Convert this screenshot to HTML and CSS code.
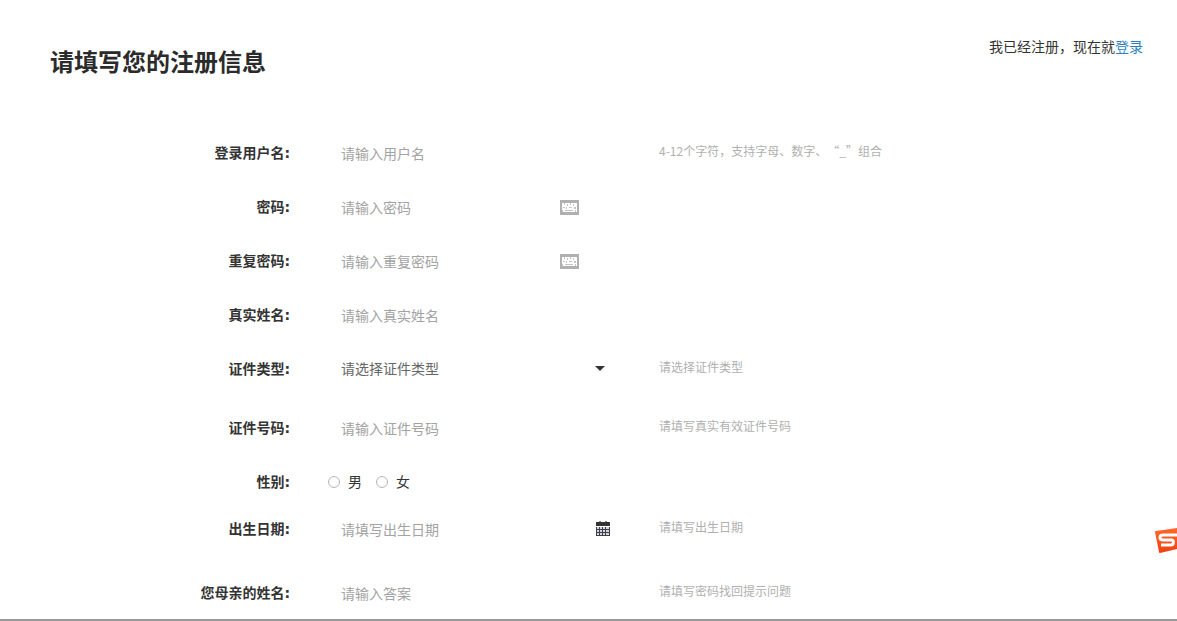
FILE: index.html
```html
<!DOCTYPE html>
<html lang="zh">
<head>
<meta charset="utf-8">
<title>注册</title>
<link rel="stylesheet" href="styles.css">
</head>
<body>
<div class="page">
  <header class="top">
    <h1 class="title">请填写您的注册信息</h1>
    <p class="login">我已经注册，现在就<a href="#" class="login-link">登录</a></p>
  </header>
  <form class="form">
    <div class="row r54">
      <label class="label">登录用户名:</label>
      <div class="field"><input class="input" placeholder="请输入用户名"></div>
      <div class="hint">4-12个字符，支持字母、数字、<span class="quote">“_”</span>组合</div>
    </div>
    <div class="row r54">
      <label class="label">密码:</label>
      <div class="field"><input class="input" placeholder="请输入密码">
        <svg class="kbd" viewBox="0 0 19 15" width="19" height="15"><rect width="19" height="15" fill="#b0b0b0"/><rect x="2" y="3" width="15" height="9" fill="#fff"/><path d="M4 3h1v2H4zM7 4h1v2H7zM10 3h1v2h-1zM13 4h1v2h-1zM3 7h2v1H3zM6 7h1v2H6zM9 7h3v1H9zM14 7h2v2h-2zM2 10h1v2H2zM5 10h8v1H5zM15 10h1v2h-1z" fill="#c4c4c4"/></svg>
      </div>
      <div class="hint"></div>
    </div>
    <div class="row r54">
      <label class="label">重复密码:</label>
      <div class="field"><input class="input" placeholder="请输入重复密码">
        <svg class="kbd" viewBox="0 0 19 15" width="19" height="15"><rect width="19" height="15" fill="#b0b0b0"/><rect x="2" y="3" width="15" height="9" fill="#fff"/><path d="M4 3h1v2H4zM7 4h1v2H7zM10 3h1v2h-1zM13 4h1v2h-1zM3 7h2v1H3zM6 7h1v2H6zM9 7h3v1H9zM14 7h2v2h-2zM2 10h1v2H2zM5 10h8v1H5zM15 10h1v2h-1z" fill="#c4c4c4"/></svg>
      </div>
      <div class="hint"></div>
    </div>
    <div class="row r54">
      <label class="label">真实姓名:</label>
      <div class="field"><input class="input" placeholder="请输入真实姓名"></div>
      <div class="hint"></div>
    </div>
    <div class="row r59">
      <label class="label">证件类型:</label>
      <div class="field"><span class="select-text">请选择证件类型</span><span class="caret"></span></div>
      <div class="hint">请选择证件类型</div>
    </div>
    <div class="row r54">
      <label class="label">证件号码:</label>
      <div class="field"><input class="input" placeholder="请输入证件号码"></div>
      <div class="hint">请填写真实有效证件号码</div>
    </div>
    <div class="row r47">
      <label class="label">性别:</label>
      <div class="radios">
        <span class="radio"></span><span class="radio-text">男</span>
        <span class="radio"></span><span class="radio-text">女</span>
      </div>
      <div class="hint"></div>
    </div>
    <div class="row r64">
      <label class="label">出生日期:</label>
      <div class="field"><input class="input" placeholder="请填写出生日期">
        <svg class="cal" viewBox="0 0 14 15" width="14" height="15"><rect x="3" y="0" width="2" height="2" fill="#888"/><rect x="9" y="0" width="2" height="2" fill="#888"/><rect x="0" y="1" width="14" height="4" fill="#333"/><rect x="0" y="6" width="14" height="9" fill="#3a3f4a"/><path d="M1 6h2v2H1zM4 6h2v2H4zM7 6h2v2H7zM10 6h3v2h-3zM1 9h2v2H1zM4 9h2v2H4zM7 9h2v2H7zM10 9h3v2h-3zM1 12h2v2H1zM4 12h2v2H4zM7 12h2v2H7zM10 12h3v2h-3z" fill="#d4d8da"/></svg>
      </div>
      <div class="hint">请填写出生日期</div>
    </div>
    <div class="row r54">
      <label class="label">您母亲的姓名:</label>
      <div class="field"><input class="input" placeholder="请输入答案"></div>
      <div class="hint">请填写密码找回提示问题</div>
    </div>
  </form>
  <svg class="sogou" viewBox="0 0 22 26" width="22" height="26"><defs><linearGradient id="sg" x1="0" y1="0" x2="0" y2="1"><stop offset="0" stop-color="#ff6a2a"/><stop offset="1" stop-color="#f0400f"/></linearGradient></defs><path d="M0 4Q0 3 1 3L22 0V21L5 25Q4 25 4 24Z" fill="url(#sg)"/><path d="M22 7H8C4 7 4 12 8 12H17C19 12 19 17 16 17H6" fill="none" stroke="#fff" stroke-width="3"/></svg>
</div>
</body>
</html>
```
FILE: styles.css
```css
* { box-sizing: border-box; }
html, body { margin: 0; padding: 0; height: 100%; overflow: hidden; background: #fff; }
body { font-family: "Noto Sans CJK SC", "Liberation Sans", sans-serif; font-size: 14px; color: #333; }
.page { position: relative; height: 621px; border-bottom: 2px solid #9a9a9a; overflow: hidden; }
.top { display: flex; justify-content: space-between; align-items: flex-start; padding: 0 34px 0 50px; height: 126px; }
.title { margin: 44px 0 0; font-size: 24px; font-weight: 700; line-height: 34px; color: #2b2b2b; }
.login { margin: 36px 0 0; line-height: 20px; color: #333; }
.login-link { color: #2a7fc1; text-decoration: none; }
.form { display: flex; flex-direction: column; }
.row { display: grid; grid-template-columns: 290px 369px 1fr; align-items: start; }
.r54 { height: 54px; }
.r59 { height: 59px; }
.r47 { height: 47px; }
.r64 { height: 64px; }
.label { font-family: "DejaVu Sans", "Noto Sans CJK SC", sans-serif; font-weight: 700; text-align: right; line-height: 54px; color: #333; }
.field { position: relative; height: 54px; display: flex; align-items: center; padding-left: 51px; }
.input { border: 0; outline: 0; padding: 0; width: 210px; font: inherit; height: 24px; color: #333; background: transparent; }
.input::placeholder { color: #a3a3a3; opacity: 1; }
.select-text { color: #666; margin-bottom: 2px; }
.kbd { position: absolute; left: 270px; top: 20px; }
.caret { position: absolute; left: 305px; top: 24px; border: 5px solid transparent; border-top-color: #333; border-bottom: 0; }
.cal { position: absolute; left: 306px; top: 19px; }
.hint { font-size: 12px; line-height: 16px; color: #b0b0b0; padding-top: 17px; }
.quote { margin-left: 6px; }
.radios { display: flex; align-items: center; height: 54px; padding-left: 38px; }
.radio { width: 12px; height: 12px; border: 1px solid #b5b5b5; border-radius: 50%; margin-right: 8px; }
.radio-text { margin-right: 14px; margin-bottom: 2px; color: #333; }
.sogou { position: absolute; left: 1155px; top: 528px; }
```
